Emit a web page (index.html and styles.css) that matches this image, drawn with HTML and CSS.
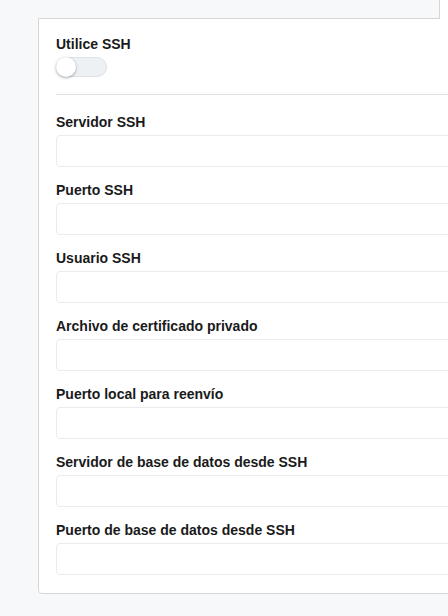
FILE: index.html
```html
<!DOCTYPE html>
<html lang="es">
<head>
    <meta charset="UTF-8">
    <meta name="viewport" content="width=device-width, initial-scale=1.0">
    <title>SSH</title>
    <link rel="stylesheet" href="styles.css">
</head>
<body>
    <div class="page">
        <div class="tabs">
            <div class="tab-active"></div>
        </div>

        <div class="panel">
            <div class="field field-toggle">
                <label class="field-label">Utilice SSH</label>
                <div class="switch">
                    <span class="switch-knob"></span>
                </div>
            </div>

            <hr class="divider">

            <div class="field">
                <label class="field-label" for="ssh-host">Servidor SSH</label>
                <input class="field-input" type="text" id="ssh-host">
            </div>
            <div class="field">
                <label class="field-label" for="ssh-port">Puerto SSH</label>
                <input class="field-input" type="text" id="ssh-port">
            </div>
            <div class="field">
                <label class="field-label" for="ssh-user">Usuario SSH</label>
                <input class="field-input" type="text" id="ssh-user">
            </div>
            <div class="field">
                <label class="field-label" for="ssh-key">Archivo de certificado privado</label>
                <input class="field-input" type="text" id="ssh-key">
            </div>
            <div class="field">
                <label class="field-label" for="ssh-local">Puerto local para reenvío</label>
                <input class="field-input" type="text" id="ssh-local">
            </div>
            <div class="field">
                <label class="field-label" for="ssh-dbhost">Servidor de base de datos desde SSH</label>
                <input class="field-input" type="text" id="ssh-dbhost">
            </div>
            <div class="field">
                <label class="field-label" for="ssh-dbport">Puerto de base de datos desde SSH</label>
                <input class="field-input" type="text" id="ssh-dbport">
            </div>
        </div>
    </div>
</body>
</html>
```

FILE: styles.css
```css
html, body {
    margin: 0;
    padding: 0;
    overflow: hidden;
}

body {
    font-family: "Liberation Sans", Arial, sans-serif;
    background: #f7f8fa;
    color: #1a1a1a;
}

.page {
    padding-left: 38px;
    width: 480px;
}

/* active tab sits on top of the panel, right side */
.tabs {
    height: 18px;
    display: flex;
    justify-content: flex-end;
}

.tab-active {
    width: 78px;
    height: 19px;
    background: #fff;
    border-left: 1px solid #d6d6d6;
    position: relative;
    z-index: 1;
}

.panel {
    background: #fff;
    border: 1px solid #d6d6d6;
    border-radius: 0 0 4px 4px;
    padding: 15px 0 18px 17px;
}

.field {
    display: flex;
    flex-direction: column;
    margin-bottom: 13px;
}

.field-toggle {
    margin-bottom: 17px;
}

.field:last-child {
    margin-bottom: 0;
}

.field-label {
    font-size: 14px;
    font-weight: bold;
    line-height: 20px;
    margin-bottom: 3px;
}

.field-input {
    height: 32px;
    box-sizing: border-box;
    border: 1px solid #ebebeb;
    border-radius: 4px;
    background: #fff;
    outline: none;
}

.switch {
    width: 51px;
    height: 20px;
    box-sizing: border-box;
    border: 1px solid #dde2e7;
    border-radius: 10px;
    background: #eef1f4;
    position: relative;
}

.switch-knob {
    position: absolute;
    left: -1px;
    top: -1px;
    width: 20px;
    height: 20px;
    border-radius: 50%;
    background: #fff;
    box-shadow: 0 1px 3px rgba(0, 0, 0, 0.35);
}

.divider {
    border: none;
    border-top: 1px solid #e2e2e2;
    margin: 0 0 17px 0;
}
```
